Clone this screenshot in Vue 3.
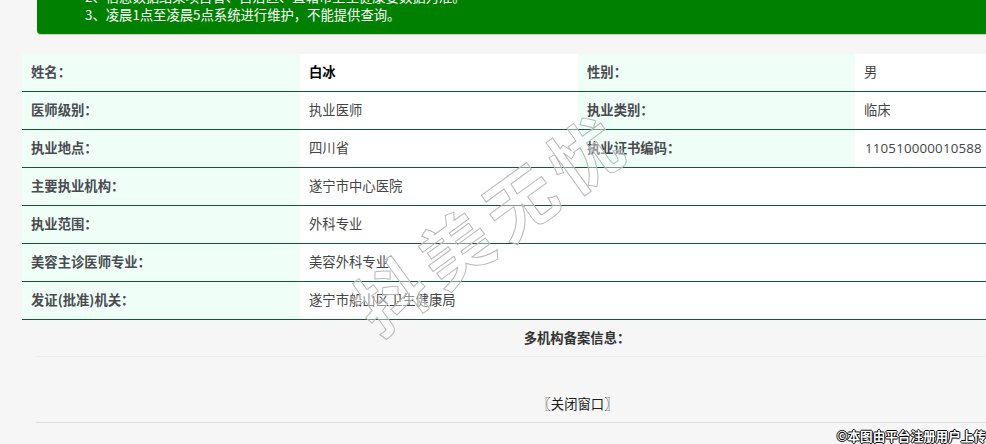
<script setup>
const rows = [
  [['姓名：', '白冰', true], ['性别：', '男']],
  [['医师级别：', '执业医师'], ['执业类别：', '临床']],
  [['执业地点：', '四川省'], ['执业证书编码：', '110510000010588']],
  [['主要执业机构：', '遂宁市中心医院']],
  [['执业范围：', '外科专业']],
  [['美容主诊医师专业：', '美容外科专业']],
  [['发证(批准)机关：', '遂宁市船山区卫生健康局']],
]
</script>

<template>
  <div class="page">
    <div class="banner">
      <p>2、信息数据结果项目省、自治区、直辖市卫生健康委数据为准。</p>
      <p>3、凌晨1点至凌晨5点系统进行维护，不能提供查询。</p>
    </div>
    <div class="info">
      <div v-for="(row, i) in rows" :key="i" class="row">
        <template v-for="(pair, j) in row" :key="j">
          <div class="cell label">{{ pair[0] }}</div>
          <div class="cell value" :class="{ strong: pair[2], wide: row.length === 1, num: pair[1].startsWith('1105') }">{{ pair[1] }}</div>
        </template>
      </div>
      <div class="multi">多机构备案信息：</div>
      <div class="close">〖关闭窗口〗</div>
    </div>
    <div class="watermark">抖美无忧</div>
    <div class="credit">©本图由平台注册用户上传</div>
  </div>
</template>

<style scoped>
.page {
  position: relative;
  width: 986px;
  height: 444px;
  overflow: hidden;
  background: #f6f6f6;
  font-family: "Noto Sans CJK SC", "Open Sans", sans-serif;
  font-size: 13.33px;
  color: #444;
}
.banner {
  box-sizing: border-box;
  height: 34px;
  margin-left: 37px;
  width: 1100px;
  padding: 0 0 10px 48px;
  background: #008000;
  border-radius: 0 0 4px 4px;
  box-shadow: 0 1px 1px #d9c8c0;
  color: #fff;
  display: flex;
  flex-direction: column;
  justify-content: flex-end;
  overflow: hidden;
}
.banner p {
  margin: 0;
  height: 18px;
  line-height: 18px;
  flex: none;
  white-space: nowrap;
}
.info {
  margin: 20px 0 0 22px;
  width: 1111px;
}
.row {
  display: grid;
  grid-template-columns: 278px 278px 277px 278px;
  height: 38px;
  box-sizing: border-box;
  border-bottom: 1px solid #14563a;
}
.cell {
  display: flex;
  align-items: center;
  padding-bottom: 2px;
  white-space: nowrap;
}
.label {
  padding-left: 9px;
  background: #effff8;
  font-weight: 700;
  color: #4a4a50;
}
.value {
  padding-left: 9px;
  background: #fff;
}
.strong {
  font-weight: 700;
  color: #000;
}
.wide {
  grid-column: 2 / 5;
}
.num {
  font-family: "Open Sans", sans-serif;
  padding-left: 10px;
  letter-spacing: 0.17px;
}
.multi {
  box-sizing: border-box;
  height: 37px;
  margin-left: 14px;
  padding: 0 15px 2px 0;
  border-bottom: 1px solid #eee;
  display: flex;
  align-items: center;
  justify-content: center;
  font-weight: 700;
  color: #333;
}
.close {
  box-sizing: border-box;
  height: 66px;
  margin-left: 14px;
  padding: 37px 14px 0 0;
  border-bottom: 1px solid #ddd;
  line-height: 20px;
  text-align: center;
  color: #1c1c1c;
}
.watermark {
  position: absolute;
  left: 490px;
  top: 220px;
  transform: translate(-50%, -50%) rotate(-36deg);
  font-size: 70px;
  font-weight: 700;
  letter-spacing: 10px;
  line-height: 1;
  white-space: nowrap;
  color: rgba(255, 255, 255, 0.4);
  -webkit-text-stroke: 1px #b8b8b8;
  pointer-events: none;
}
.credit {
  position: absolute;
  right: 0;
  bottom: 0;
  font-size: 12.6px;
  line-height: 16px;
  font-weight: 700;
  color: #fff;
  text-shadow: 1px 0 0 #000, -1px 0 0 #000, 0 1px 0 #000, 0 -1px 0 #000;
  white-space: nowrap;
}
</style>
